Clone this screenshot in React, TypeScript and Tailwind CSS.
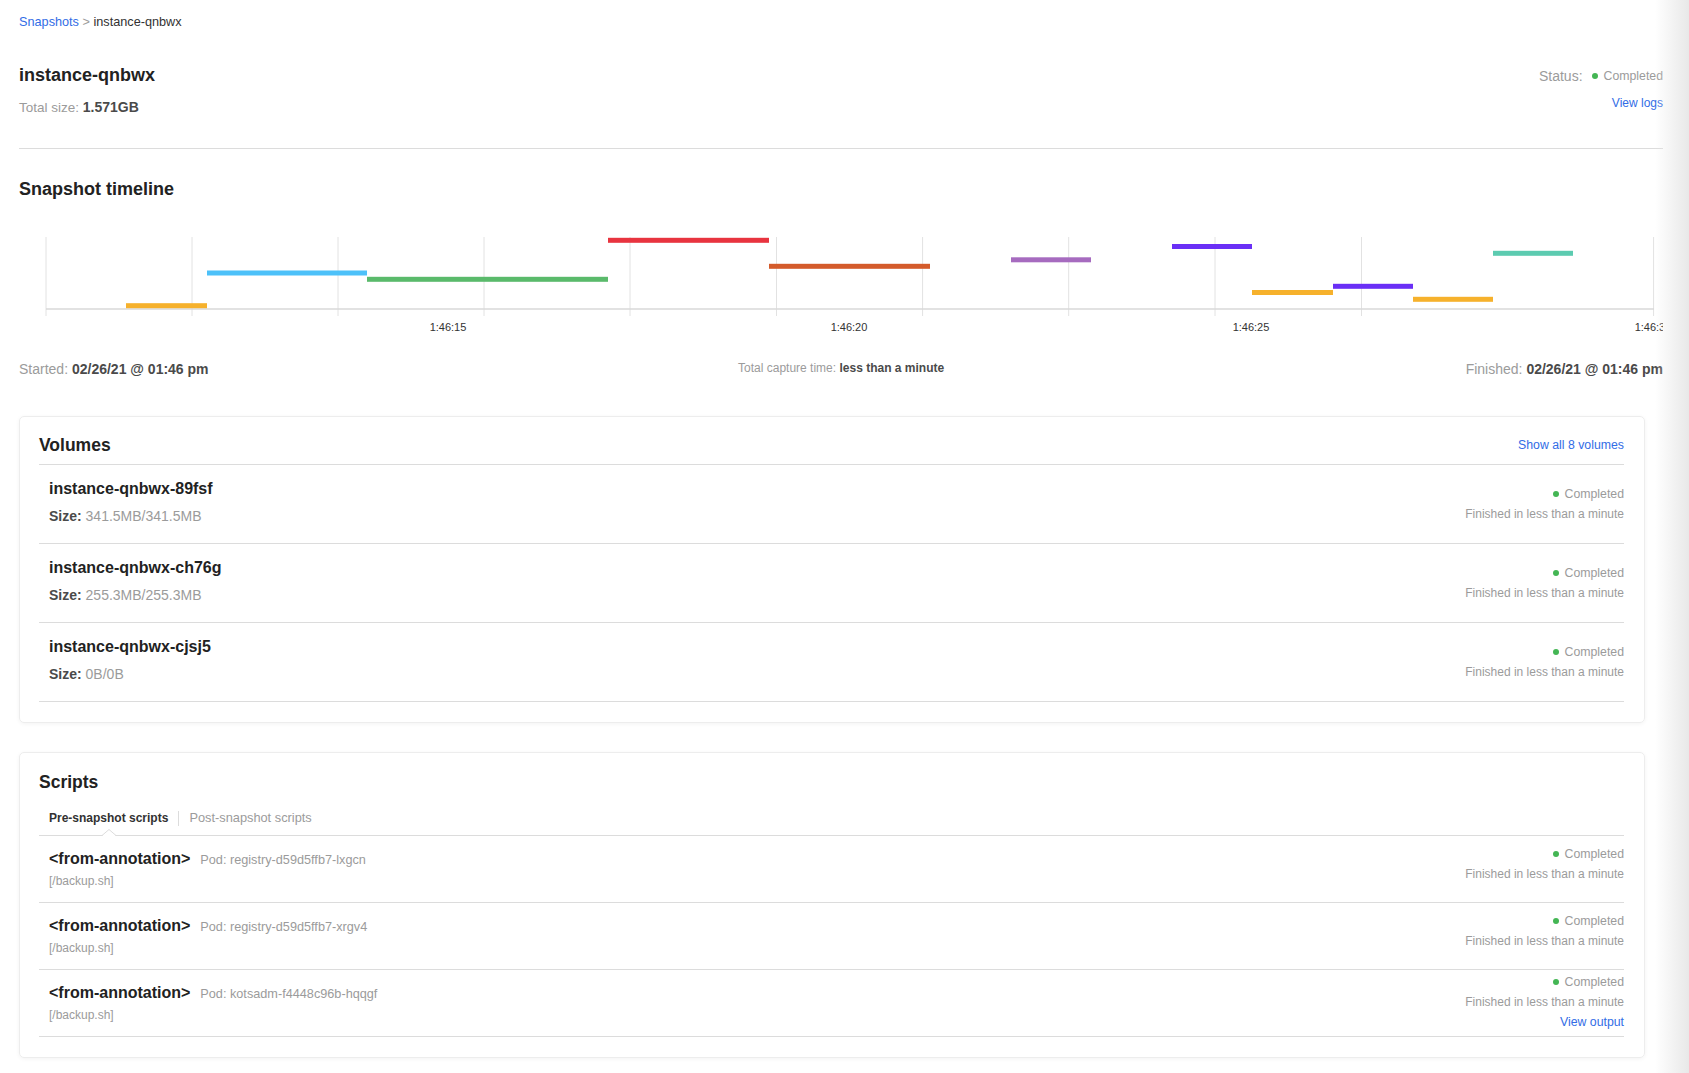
import React from 'react';

const bars = [
  { x1: 126, x2: 207, y: 305.7, color: '#f6b12c' },
  { x1: 207, x2: 367, y: 273, color: '#4dc1f9' },
  { x1: 367, x2: 608, y: 279.3, color: '#5aba6b' },
  { x1: 608, x2: 769, y: 240.3, color: '#e8343f' },
  { x1: 769, x2: 930, y: 266.3, color: '#d45b2b' },
  { x1: 1011, x2: 1091, y: 259.8, color: '#a66bbf' },
  { x1: 1172, x2: 1252, y: 246.5, color: '#6a2ff6' },
  { x1: 1252, x2: 1333, y: 292.5, color: '#f6b12c' },
  { x1: 1333, x2: 1413, y: 286.3, color: '#6a2ff6' },
  { x1: 1413, x2: 1493, y: 299.3, color: '#f6b12c' },
  { x1: 1493, x2: 1573, y: 253.3, color: '#5ccbb0' },
];

const gridXs = [46, 192, 338, 484, 630, 776.5, 922.6, 1068.7, 1215, 1361.5, 1653.6];
const labels = [
  { x: 448, t: '1:46:15' },
  { x: 849, t: '1:46:20' },
  { x: 1251, t: '1:46:25' },
  { x: 1653, t: '1:46:30' },
];

// svg sits at page x=19, y=230
const OX = 19;
const OY = 230;

const volumes = [
  { name: 'instance-qnbwx-89fsf', size: '341.5MB/341.5MB' },
  { name: 'instance-qnbwx-ch76g', size: '255.3MB/255.3MB' },
  { name: 'instance-qnbwx-cjsj5', size: '0B/0B' },
];

const scripts = [
  { pod: 'registry-d59d5ffb7-lxgcn', output: false },
  { pod: 'registry-d59d5ffb7-xrgv4', output: false },
  { pod: 'kotsadm-f4448c96b-hqqgf', output: true },
];

const Dot = () => <span className="inline-block w-[6px] h-[6px] rounded-full bg-[#44b654] mr-[6px]" />;

const Timeline = () => (
  <svg width={1644} height={110} className="block">
    {gridXs.map((x) => (
      <line key={x} x1={x - OX} x2={x - OX} y1={237 - OY} y2={316 - OY} stroke="#e2e2e2" strokeWidth={1} />
    ))}
    <line x1={46 - OX} x2={1654 - OX} y1={309 - OY} y2={309 - OY} stroke="#d9d9d9" strokeWidth={1.5} />
    {bars.map((b, i) => (
      <rect key={i} x={b.x1 - OX} y={b.y - 2.5 - OY} width={b.x2 - b.x1} height={5} fill={b.color} />
    ))}
    {labels.map((l) => (
      <text
        key={l.t}
        x={l.x - OX}
        y={331 - OY}
        textAnchor="middle"
        fontSize={11}
        fill="#333333"
        fontFamily="Liberation Sans, Arial, sans-serif"
      >
        {l.t}
      </text>
    ))}
  </svg>
);

export default function App() {
  return (
    <div className="relative min-h-screen bg-white overflow-hidden font-['Liberation_Sans',Arial,sans-serif] text-[#323232]">
      <div className="pl-[19px] pr-[26px] pb-[16px]">
        {/* Breadcrumb */}
        <div className="pt-[14px] text-[12.7px] leading-[16px]">
          <span className="text-[#326de6]">Snapshots</span>
          <span className="text-[#9b9b9b]"> &gt; </span>
          <span>instance-qnbwx</span>
        </div>

        {/* Title */}
        <div className="mt-[34px] flex justify-between items-start">
          <div>
            <h1 className="text-[18px] leading-[22px] font-bold text-[#222]">instance-qnbwx</h1>
            <p className="mt-[13px] h-[16px] text-[13.5px] leading-[16px] text-[#9b9b9b]">
              Total size: <span className="text-[14px] leading-[16px] font-bold text-[#4a4a4a]">1.571GB</span>
            </p>
          </div>
          <div className="mt-[3px] flex flex-col items-end">
            <div className="flex items-center leading-[18px]">
              <span className="text-[14px] text-[#9b9b9b] mr-[9px]">Status:</span>
              <Dot />
              <span className="text-[12.3px] text-[#9b9b9b]">Completed</span>
            </div>
            <a className="mt-[10px] text-[12px] leading-[16px] text-[#326de6]">View logs</a>
          </div>
        </div>

        <div className="mt-[33px] h-px bg-[#dcdcdc]" />

        {/* Timeline */}
        <h2 className="mt-[29px] text-[18px] leading-[22px] font-bold text-[#222]">Snapshot timeline</h2>
        <div className="mt-[30px]">
          <Timeline />
        </div>
        <div className="mt-[20px] flex justify-between items-center leading-[18px]">
          <span className="text-[14px] text-[#9b9b9b]">
            Started: <span className="font-bold text-[#4a4a4a]">02/26/21 @ 01:46 pm</span>
          </span>
          <span className="text-[12px] text-[#9b9b9b] pl-[8px] -mt-[3px]">
            Total capture time: <span className="font-bold text-[#4a4a4a]">less than a minute</span>
          </span>
          <span className="text-[14px] text-[#9b9b9b]">
            Finished: <span className="font-bold text-[#4a4a4a]">02/26/21 @ 01:46 pm</span>
          </span>
        </div>

        {/* Volumes */}
        <div className="mt-[38px] mr-[18px] rounded-[5px] border border-[#ededed] shadow-[0_1px_4px_rgba(0,0,0,0.05)] pl-[19px] pr-[20px] pb-[20px]">
          <div className="pt-[17px] pb-[8px] flex justify-between items-center border-b border-[#dcdcdc]">
            <h2 className="text-[17.5px] leading-[22px] font-bold text-[#222]">Volumes</h2>
            <a className="text-[12.3px] leading-[16px] text-[#326de6]">Show all 8 volumes</a>
          </div>
          {volumes.map((v) => (
            <div key={v.name} className="h-[79px] border-b border-[#dcdcdc] flex justify-between items-start pl-[10px]">
              <div className="pt-[14px]">
                <div className="text-[16px] leading-[20px] font-bold text-[#222]">{v.name}</div>
                <div className="mt-[8px] text-[14px] leading-[18px] text-[#9b9b9b]">
                  <span className="font-bold text-[#4a4a4a]">Size:</span> {v.size}
                </div>
              </div>
              <div className="pt-[20px] flex flex-col items-end text-[12px] leading-[18px] text-[#9b9b9b]">
                <div className="flex items-center text-[12.3px]">
                  <Dot />
                  Completed
                </div>
                <div className="mt-[2px]">Finished in less than a minute</div>
              </div>
            </div>
          ))}
        </div>

        {/* Scripts */}
        <div className="mt-[29px] mr-[18px] rounded-[5px] border border-[#ededed] shadow-[0_1px_4px_rgba(0,0,0,0.05)] pl-[19px] pr-[20px] pb-[20px]">
          <h2 className="pt-[18px] text-[17.5px] leading-[22px] font-bold text-[#222]">Scripts</h2>
          <div className="relative mt-[17px] pb-[9px] pl-[10px] flex items-center border-b border-[#dcdcdc] text-[12px] leading-[16px]">
            <span className="font-bold text-[#323232]">Pre-snapshot scripts</span>
            <span className="ml-[10px] w-px h-[15px] bg-[#dcdcdc]" />
            <span className="ml-[10px] text-[12.8px] text-[#9b9b9b]">Post-snapshot scripts</span>
            <svg width={14} height={7} className="absolute left-[63px] -bottom-[1px]">
              <polyline points="0,6.5 7,0.5 14,6.5" fill="white" stroke="#dcdcdc" strokeWidth={1} />
              <rect x={1} y={6} width={12} height={1} fill="white" />
            </svg>
          </div>
          {scripts.map((s) => (
            <div key={s.pod} className="h-[67px] border-b border-[#dcdcdc] flex justify-between items-start pl-[10px]">
              <div className="pt-[13px]">
                <div className="flex items-baseline">
                  <span className="text-[16px] leading-[20px] font-bold text-[#222]">&lt;from-annotation&gt;</span>
                  <span className="ml-[10px] text-[12.7px] text-[#9b9b9b]">Pod: {s.pod}</span>
                </div>
                <div className="mt-[3px] text-[12px] leading-[16px] text-[#9b9b9b]">[/backup.sh]</div>
              </div>
              <div
                className={`${s.output ? 'pt-[2px]' : 'pt-[8px]'} flex flex-col items-end text-[12px] leading-[20px] text-[#9b9b9b]`}
              >
                <div className="flex items-center text-[12.3px]">
                  <Dot />
                  Completed
                </div>
                <div>Finished in less than a minute</div>
                {s.output && <a className="text-[12.3px] text-[#326de6]">View output</a>}
              </div>
            </div>
          ))}
        </div>
      </div>

      {/* right edge shade */}
      <div className="pointer-events-none absolute top-0 right-0 bottom-0 w-[34px] bg-gradient-to-r from-white/0 to-[#e8e8e8]" />
    </div>
  );
}
